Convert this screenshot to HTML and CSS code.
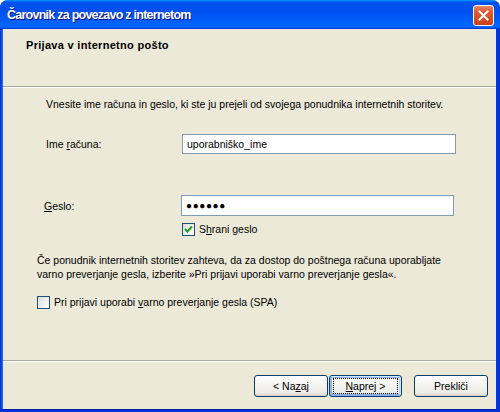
FILE: index.html
```html
<!DOCTYPE html>
<html lang="sl">
<head>
<meta charset="utf-8">
<title>Čarovnik za povezavo z internetom</title>
<link rel="stylesheet" href="styles.css">
</head>
<body>
<div class="window">
  <div class="titlebar">
    <span class="title">Čarovnik za povezavo z internetom</span>
    <span class="close">
      <svg width="11" height="11" viewBox="0 0 11 11"><path d="M1.5 1.5 L9.5 9.5 M9.5 1.5 L1.5 9.5" stroke="#fff" stroke-width="2" stroke-linecap="square"/></svg>
    </span>
  </div>
  <div class="client">
    <div class="header">
      <div class="heading">Prijava v internetno pošto</div>
    </div>
    <div class="sep"></div>
    <div class="body">
      <p class="intro">Vnesite ime računa in geslo, ki ste ju prejeli od svojega ponudnika internetnih storitev.</p>
      <div class="row row-name">
        <span class="label">Ime <u>r</u>ačuna:</span>
        <div class="input">uporabniško_ime</div>
      </div>
      <div class="row row-pass">
        <span class="label label-pass"><u>G</u>eslo:</span>
        <div class="input input-pass">●●●●●●</div>
      </div>
      <div class="check-row save">
        <span class="cb checked"><svg width="9" height="9" viewBox="0 0 9 9"><path d="M1 4 L3.3 6.5 L8 1.5" fill="none" stroke="#21a121" stroke-width="2"/></svg></span>
        <span>S<u>h</u>rani geslo</span>
      </div>
      <p class="note">Če ponudnik internetnih storitev zahteva, da za dostop do poštnega računa uporabljate varno preverjanje gesla, izberite »Pri prijavi uporabi varno preverjanje gesla«.</p>
      <div class="check-row spa">
        <span class="cb"></span>
        <span>Pri prijavi uporabi <u>v</u>arno preverjanje gesla (SPA)</span>
      </div>
    </div>
    <div class="sep footer-sep"></div>
    <div class="footer">
      <button class="btn">&lt; Na<u>z</u>aj</button>
      <button class="btn default"><span class="focus"><u>N</u>aprej &gt;</span></button>
      <button class="btn cancel">Prekliči</button>
    </div>
  </div>
</div>
</body>
</html>
```
FILE: styles.css
```css
html, body {
  margin: 0;
  padding: 0;
  background: #fff;
}
body {
  width: 500px;
  height: 412px;
  overflow: hidden;
  font-family: "Liberation Sans", Arial, sans-serif;
  font-size: 10.5px;
  color: #000;
}
.window {
  width: 500px;
  height: 412px;
  box-sizing: border-box;
  display: flex;
  flex-direction: column;
  border-radius: 8px 8px 0 0;
  overflow: hidden;
  background: #0831d9;
}
.titlebar {
  height: 29px;
  flex: none;
  display: flex;
  align-items: center;
  justify-content: space-between;
  padding: 0 6px 0 7px;
  background: linear-gradient(180deg, #0997ff, #0053ee 8%, #0050ee 40%, #0066ff 88%, #0066ff 93%, #005bff 95%, #003dd7 96%, #003dd7);
}
.title {
  color: #fff;
  font-family: "Liberation Sans", Arial, sans-serif;
  font-weight: bold;
  font-size: 12.5px;
  letter-spacing: -0.75px;
  text-shadow: 1px 1px #0f1089;
  padding-top: 1px;
}
.close {
  width: 21px;
  height: 21px;
  box-sizing: border-box;
  border: 1px solid #fff;
  border-radius: 3px;
  background: linear-gradient(180deg, #e9876a 0%, #e05a34 30%, #d64a22 70%, #c8411c 100%);
  display: flex;
  align-items: center;
  justify-content: center;
  margin-top: 1px;
}
.client {
  flex: 1;
  display: flex;
  flex-direction: column;
  background: #ece9d8;
  margin: 0 4px 3px 3px;
  box-shadow: -1px 0 #166aee, -2px 0 #0855dd, 1px 0 #003bda, 0 1px #001ea0;
}
.header {
  height: 57px;
  flex: none;
  padding: 9px 0 0 23px;
  box-sizing: border-box;
}
.heading {
  font-weight: bold;
  font-size: 11px;
  letter-spacing: 0.3px;
  line-height: 14px;
}
.sep {
  height: 1px;
  border-top: 1px solid #aca899;
  background: #fff;
  flex: none;
}
.body {
  flex: 1;
  display: flex;
  flex-direction: column;
}
p {
  margin: 0;
  line-height: 14px;
}
.intro {
  margin: 9px 0 0 43px;
}
.row {
  display: flex;
  align-items: center;
  margin-left: 43px;
}
.row-name {
  margin-top: 23px;
}
.row-pass {
  margin-top: 41px;
}
.label {
  width: 136px;
  flex: none;
}
.label-pass {
  margin-left: -2px;
  width: 137px;
}
.input {
  width: 274px;
  height: 20px;
  box-sizing: border-box;
  border: 1px solid #7f9db9;
  background: #fff;
  padding: 0 4px;
  line-height: 18px;
}
.input-pass {
  width: 273px;
  font-size: 10px;
  letter-spacing: 0.6px;
  height: 21px;
  line-height: 19px;
}
.check-row {
  display: flex;
  align-items: center;
  gap: 4px;
  line-height: 14px;
}
.save {
  margin: 6px 0 0 179px;
}
.cb {
  width: 13px;
  height: 13px;
  box-sizing: border-box;
  border: 1px solid #1c5180;
  background: linear-gradient(135deg, #dcdcd7, #fff);
  display: flex;
  align-items: center;
  justify-content: center;
  flex: none;
}
.note {
  margin: 17px 0 0 34px;
  width: 412px;
}
.spa {
  margin: 14px 0 0 34px;
}
.footer {
  height: 47px;
  flex: none;
  box-sizing: border-box;
  display: flex;
  align-items: flex-start;
  padding: 13px 0 0 251px;
}
.btn {
  width: 74px;
  height: 22px;
  box-sizing: border-box;
  border: 1px solid #003c74;
  border-radius: 3px;
  background: linear-gradient(180deg, #fff, #ecebe6 86%, #d6d0c5);
  font-family: "Liberation Sans", Arial, sans-serif;
  font-size: 10.5px;
  color: #000;
  padding: 0;
  margin: 0 1px 0 0;
  display: flex;
  align-items: center;
  justify-content: center;
}
.default {
  width: 73px;
  box-shadow: inset -1px 1px #cee7ff, inset 1px 2px #98b8ea, inset -2px 2px #bcd4f6, inset 1px -1px #89ade4, inset 2px -2px #89ade4;
}
.focus {
  display: flex;
  align-items: center;
  justify-content: center;
  width: 63px;
  height: 14px;
  outline: 1px dotted #000;
}
.cancel {
  margin-left: 11px;
}
```
